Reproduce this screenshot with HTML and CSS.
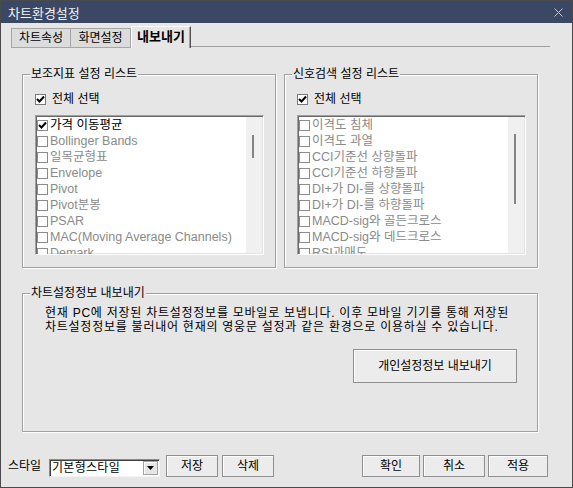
FILE: index.html
```html
<!DOCTYPE html>
<html lang="ko">
<head>
<meta charset="utf-8">
<title>차트환경설정</title>
<link rel="stylesheet" href="styles.css">
</head>
<body>
<div class="window">
  <div class="titlebar">
    <span class="title">차트환경설정</span>
    <svg class="close" width="9" height="9" viewBox="0 0 9 9"><path d="M0.5 0.5 L8.5 8.5 M8.5 0.5 L0.5 8.5" stroke="#c3c8d4" stroke-width="1" fill="none"/></svg>
  </div>
  <div class="tabstrip">
    <div class="tab">차트속성</div>
    <div class="tab">화면설정</div>
    <div class="tab active">내보내기</div>
    <div class="tabline"></div>
  </div>
  <div class="panel">
    <div class="groups">
      <fieldset class="group half">
        <legend>보조지표 설정 리스트</legend>
        <div class="body">
          <div class="check-all"><span class="cb"><svg width="9" height="9" viewBox="0 0 9 9"><path d="M1 4 L3.5 6.5 L8 1.5" stroke="#000" stroke-width="2" fill="none"/></svg></span>전체 선택</div>
          <div class="listbox">
            <div class="items">
              <div class="item on"><span class="cb"><svg width="9" height="9" viewBox="0 0 9 9"><path d="M1 4 L3.5 6.5 L8 1.5" stroke="#000" stroke-width="2" fill="none"/></svg></span>가격 이동평균</div>
              <div class="item"><span class="cb"></span>Bollinger Bands</div>
              <div class="item"><span class="cb"></span>일목균형표</div>
              <div class="item"><span class="cb"></span>Envelope</div>
              <div class="item"><span class="cb"></span>Pivot</div>
              <div class="item"><span class="cb"></span>Pivot분봉</div>
              <div class="item"><span class="cb"></span>PSAR</div>
              <div class="item"><span class="cb"></span>MAC(Moving Average Channels)</div>
              <div class="item"><span class="cb"></span>Demark</div>
            </div>
            <div class="scroll"><div class="thumb short"></div></div>
          </div>
        </div>
      </fieldset>
      <fieldset class="group half">
        <legend>신호검색 설정 리스트</legend>
        <div class="body">
          <div class="check-all"><span class="cb"><svg width="9" height="9" viewBox="0 0 9 9"><path d="M1 4 L3.5 6.5 L8 1.5" stroke="#000" stroke-width="2" fill="none"/></svg></span>전체 선택</div>
          <div class="listbox">
            <div class="items">
              <div class="item"><span class="cb"></span>이격도 침체</div>
              <div class="item"><span class="cb"></span>이격도 과열</div>
              <div class="item"><span class="cb"></span>CCI기준선 상향돌파</div>
              <div class="item"><span class="cb"></span>CCI기준선 하향돌파</div>
              <div class="item"><span class="cb"></span>DI+가 DI-를 상향돌파</div>
              <div class="item"><span class="cb"></span>DI+가 DI-를 하향돌파</div>
              <div class="item"><span class="cb"></span>MACD-sig와 골든크로스</div>
              <div class="item"><span class="cb"></span>MACD-sig와 데드크로스</div>
              <div class="item"><span class="cb"></span>RSI과매도</div>
            </div>
            <div class="scroll"><div class="thumb long"></div></div>
          </div>
        </div>
      </fieldset>
    </div>
    <fieldset class="group export">
      <legend>차트설정정보 내보내기</legend>
      <div class="body export-body">
        <p class="desc">현재 PC에 저장된 차트설정정보를 모바일로 보냅니다. 이후 모바일 기기를 통해 저장된<br>차트설정정보를 불러내어 현재의 영웅문 설정과 같은 환경으로 이용하실 수 있습니다.</p>
        <div class="btn big">개인설정정보 내보내기</div>
      </div>
    </fieldset>
  </div>
  <div class="footer">
    <span class="lbl">스타일</span>
    <div class="select"><span class="sel-text">기본형스타일</span><span class="drop"><svg width="7" height="4" viewBox="0 0 7 4"><path d="M0 0 H7 L3.5 4 Z" fill="#000"/></svg></span></div>
    <div class="btn save">저장</div>
    <div class="btn del">삭제</div>
    <div class="btn ok">확인</div>
    <div class="btn cancel">취소</div>
    <div class="btn apply">적용</div>
  </div>
</div>
</body>
</html>
```

FILE: styles.css
```css
* { box-sizing: border-box; }
html, body { margin: 0; padding: 0; }
body {
  font-family: "Liberation Sans", "Noto Sans CJK KR", sans-serif;
  font-size: 12px;
  color: #000;
  background: #ffffff;
}
.window {
  width: 573px;
  height: 488px;
  border: 1px solid #4a4a4a;
  background: #e6e6e6;
  display: flex;
  flex-direction: column;
}
.titlebar {
  height: 22px;
  flex: 0 0 22px;
  background: #3b4865;
  color: #f2f2f2;
  font-size: 13px;
  display: flex;
  align-items: center;
  justify-content: space-between;
  padding: 0 9px 0 7px;
}
.close { display: block; }

.tabstrip {
  height: 25px;
  flex: 0 0 25px;
  display: flex;
  align-items: flex-end;
  padding-left: 10px;
}
.tab {
  width: 60px;
  height: 20px;
  border: 1px solid #a6a6a6;
  border-left: none;
  background: #dcdcdc;
  display: flex;
  align-items: center;
  justify-content: center;
  line-height: 14px;
}
.tab:first-child { border-left: 1px solid #a6a6a6; }
.tab.active {
  height: 22px;
  background: #e6e6e6;
  border-top: 1px solid #ffffff;
  border-left: 1px solid #ffffff;
  border-right: 1px solid #555555;
  border-bottom: none;
  box-shadow: inset -1px 0 0 #a0a0a0;
  font-weight: bold;
  font-size: 13px;
  padding-bottom: 1px;
}
.tabline {
  width: 359px;
  height: 1px;
  margin-bottom: 1px;
  background: #a0a0a0;
}

.panel {
  padding-top: 19px;
  display: flex;
  flex-direction: column;
}
.groups {
  display: flex;
  gap: 8px;
  padding-left: 21px;
}
.group {
  margin: 0;
  padding: 0;
  min-width: 0;
  border: 1px solid #a0a0a0;
  box-shadow: inset 1px 1px 0 #ffffff, 1px 1px 0 #ffffff;
}
.group legend {
  margin-left: 7px;
  padding: 0 1px;
  line-height: 14px;
  font-size: 12px;
  background: #e6e6e6;
}
.half { width: 254px; }
.body {
  padding: 11px 11px 12px 12px;
}
.check-all {
  display: flex;
  align-items: center;
  height: 14px;
  line-height: 14px;
}
.cb {
  width: 11px;
  height: 11px;
  flex: 0 0 11px;
  border: 1px solid #8c8c8c;
  background: #ffffff;
  display: flex;
  align-items: center;
  justify-content: center;
}
.cb svg { display: block; }
.check-all .cb { margin-right: 6px; border-color: #7a7a7a; }

.listbox {
  margin-top: 9px;
  width: 229px;
  height: 140px;
  background: #ffffff;
  border-top: 1px solid #a0a0a0;
  border-left: 1px solid #a0a0a0;
  border-bottom: 1px solid #ffffff;
  border-right: 1px solid #ffffff;
  box-shadow: inset 1px 1px 0 #696969, inset -1px -1px 0 #e3e3e3;
  display: flex;
}
.items {
  flex: 1;
  overflow: hidden;
  padding: 1px 0 0 1px;
}
.item {
  height: 16px;
  display: flex;
  align-items: center;
  white-space: nowrap;
  color: #8a8a8a;
  font-size: 12.5px;
  line-height: 16px;
}
.item.on { color: #000; }
.item .cb { margin-right: 2px; }
.scroll {
  width: 16px;
  margin: 1px 1px 1px 0;
  background: #f0f0f0;
  padding: 17px 0 0 6px;
}
.thumb {
  width: 2px;
  background: #858585;
}
.thumb.short { height: 23px; margin-top: 1px; }
.thumb.long { height: 70px; }

.export {
  margin: 18px 0 0 21px;
  width: 516px;
}
.export-body {
  padding: 6px 20px 48px 22px;
  display: flex;
  flex-direction: column;
}
.desc {
  margin: 0;
  line-height: 14px;
  letter-spacing: 0.75px;
  white-space: nowrap;
}
.btn {
  height: 22px;
  background: #ececec;
  border: 1px solid #8f8f8f;
  box-shadow: inset 1px 1px 0 #ffffff;
  display: flex;
  align-items: center;
  justify-content: center;
  line-height: 14px;
}
.btn.big {
  align-self: flex-end;
  width: 164px;
  height: 34px;
  margin-top: 15px;
}

.footer {
  margin-top: auto;
  display: flex;
  align-items: center;
  padding: 0 24px 10px 7px;
}
.lbl { line-height: 14px; width: 38px; flex: 0 0 38px; white-space: nowrap; }
.select {
  margin-left: 3px;
  width: 111px;
  height: 18px;
  margin-top: 3px;
  background: #ffffff;
  border-top: 1px solid #8a8a8a;
  border-left: 1px solid #8a8a8a;
  border-bottom: 1px solid #f4f4f4;
  border-right: 1px solid #f4f4f4;
  box-shadow: inset 1px 1px 0 #404040;
  display: flex;
  align-items: center;
  padding-left: 2px;
}
.sel-text { line-height: 14px; letter-spacing: 0.3px; }
.drop {
  margin-left: auto;
  margin-right: 1px;
  width: 15px;
  height: 14px;
  background: #e6e6e6;
  border: 1px solid #a0a0a0;
  box-shadow: inset 1px 1px 0 #ffffff;
  display: flex;
  align-items: center;
  justify-content: center;
}
.drop svg { display: block; }
.save { width: 52px; margin-left: 6px; }
.del { width: 52px; margin-left: 4px; }
.ok { width: 58px; margin-left: auto; }
.cancel { width: 62px; margin-left: 3px; }
.apply { width: 60px; margin-left: 3px; }
```
